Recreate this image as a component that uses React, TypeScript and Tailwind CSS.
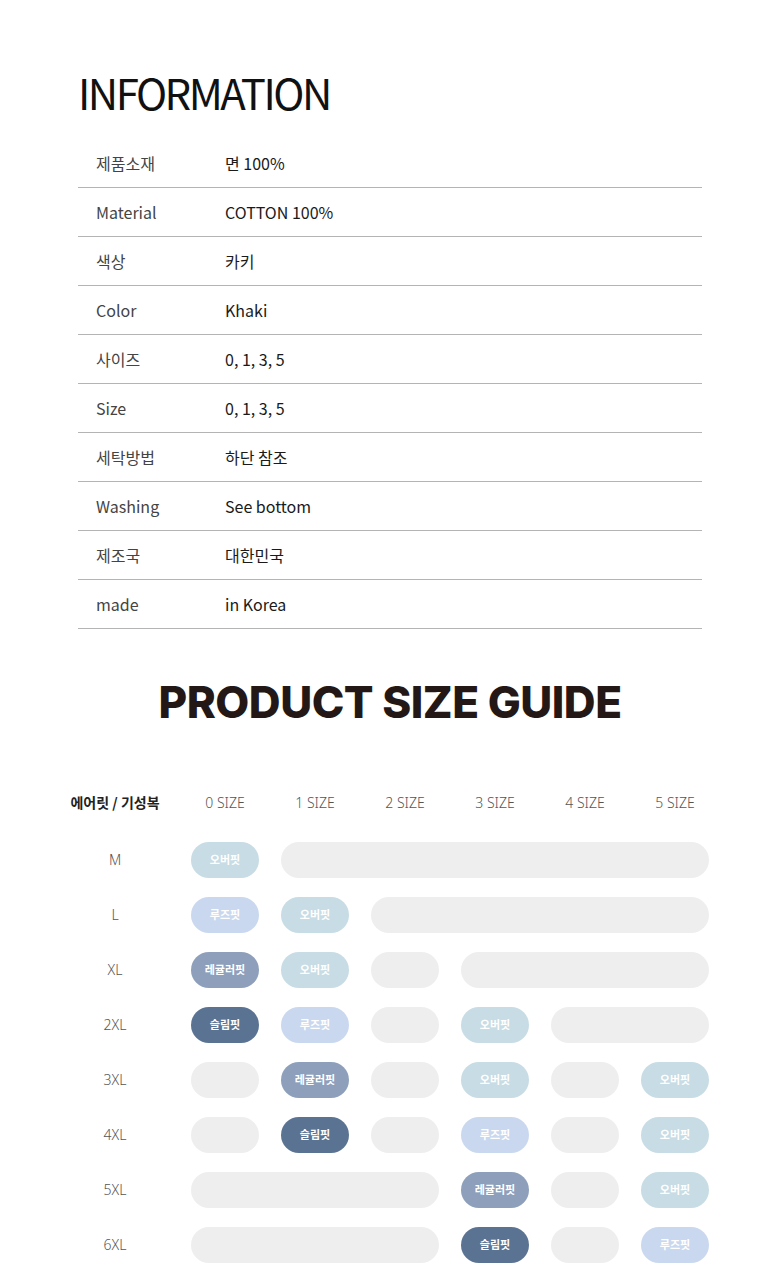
const info: [string, string][] = [
  ['제품소재', '면 100%'],
  ['Material', 'COTTON 100%'],
  ['색상', '카키'],
  ['Color', 'Khaki'],
  ['사이즈', '0, 1, 3, 5'],
  ['Size', '0, 1, 3, 5'],
  ['세탁방법', '하단 참조'],
  ['Washing', 'See bottom'],
  ['제조국', '대한민국'],
  ['made', 'in Korea'],
];

type Fit = 'over' | 'loose' | 'regular' | 'slim' | 'empty';
type Cell = { fit: Fit; span?: number };

const fitStyle: Record<Fit, string> = {
  over: 'bg-[#c7dce4]',
  loose: 'bg-[#c9d8ee]',
  regular: 'bg-[#8d9fba]',
  slim: 'bg-[#5a7392]',
  empty: 'bg-[#eeeeee]',
};

const fitLabel: Record<Fit, string> = {
  over: '오버핏',
  loose: '루즈핏',
  regular: '레귤러핏',
  slim: '슬림핏',
  empty: '',
};

const spanClass: Record<number, string> = {
  1: 'col-span-1',
  2: 'col-span-2',
  3: 'col-span-3',
  4: 'col-span-4',
  5: 'col-span-5',
};

const rows: [string, Cell[]][] = [
  ['M', [{ fit: 'over' }, { fit: 'empty', span: 5 }]],
  ['L', [{ fit: 'loose' }, { fit: 'over' }, { fit: 'empty', span: 4 }]],
  ['XL', [{ fit: 'regular' }, { fit: 'over' }, { fit: 'empty' }, { fit: 'empty', span: 3 }]],
  ['2XL', [{ fit: 'slim' }, { fit: 'loose' }, { fit: 'empty' }, { fit: 'over' }, { fit: 'empty', span: 2 }]],
  ['3XL', [{ fit: 'empty' }, { fit: 'regular' }, { fit: 'empty' }, { fit: 'over' }, { fit: 'empty' }, { fit: 'over' }]],
  ['4XL', [{ fit: 'empty' }, { fit: 'slim' }, { fit: 'empty' }, { fit: 'loose' }, { fit: 'empty' }, { fit: 'over' }]],
  ['5XL', [{ fit: 'empty', span: 3 }, { fit: 'regular' }, { fit: 'empty' }, { fit: 'over' }]],
  ['6XL', [{ fit: 'empty', span: 3 }, { fit: 'slim' }, { fit: 'empty' }, { fit: 'loose' }]],
];

const sizes = ['0 SIZE', '1 SIZE', '2 SIZE', '3 SIZE', '4 SIZE', '5 SIZE'];

export default function App() {
  return (
    <div className="w-[780px] h-[1280px] bg-white font-['Noto_Sans_CJK_KR','Noto_Sans',sans-serif] overflow-hidden">
      {/* Information */}
      <div className="px-[78px] pt-[66px]">
        <h1 className="text-[42px] leading-[52px] font-normal text-[#111] tracking-[-2.5px]">INFORMATION</h1>
        <div className="mt-[21px]">
          {info.map(([k, v]) => (
            <div key={k} className="h-[49px] flex items-center border-b border-[#b4b4b4] text-[16px]">
              <span className="w-[147px] pl-[18px] text-[#444]">{k}</span>
              <span className="text-[#1a1a1a]">{v}</span>
            </div>
          ))}
        </div>
      </div>

      {/* Size guide */}
      <h2 className="mt-[47px] text-center font-['Inter',sans-serif] font-extrabold text-[44px] leading-[52px] text-[#231815] tracking-[-0.5px]">
        PRODUCT SIZE GUIDE
      </h2>

      <div className="mt-[59px] ml-[50px] grid grid-cols-[130px_repeat(6,90px)]">
        <div className="h-[30px] flex items-center justify-center text-[14px] font-bold text-[#222]">에어릿 / 기성복</div>
        {sizes.map((s) => (
          <div key={s} className="h-[30px] flex items-center justify-center text-[14px] font-light text-[#555] font-['Noto_Sans',sans-serif]">
            {s}
          </div>
        ))}
        <div className="col-span-7 h-[15px]" />
        {rows.map(([label, cells]) => (
          <div key={label} className="contents">
            <div className="h-[55px] flex items-center justify-center text-[14px] text-[#555] font-['Noto_Sans',sans-serif] font-light">
              {label}
            </div>
            {cells.map((c, i) => (
              <div key={i} className={`h-[55px] flex items-center px-[11px] ${spanClass[c.span ?? 1]}`}>
                <div className={`w-full h-[36px] rounded-full flex items-center justify-center text-[11px] font-bold text-white ${fitStyle[c.fit]}`}>
                  {fitLabel[c.fit]}
                </div>
              </div>
            ))}
          </div>
        ))}
      </div>
    </div>
  );
}
